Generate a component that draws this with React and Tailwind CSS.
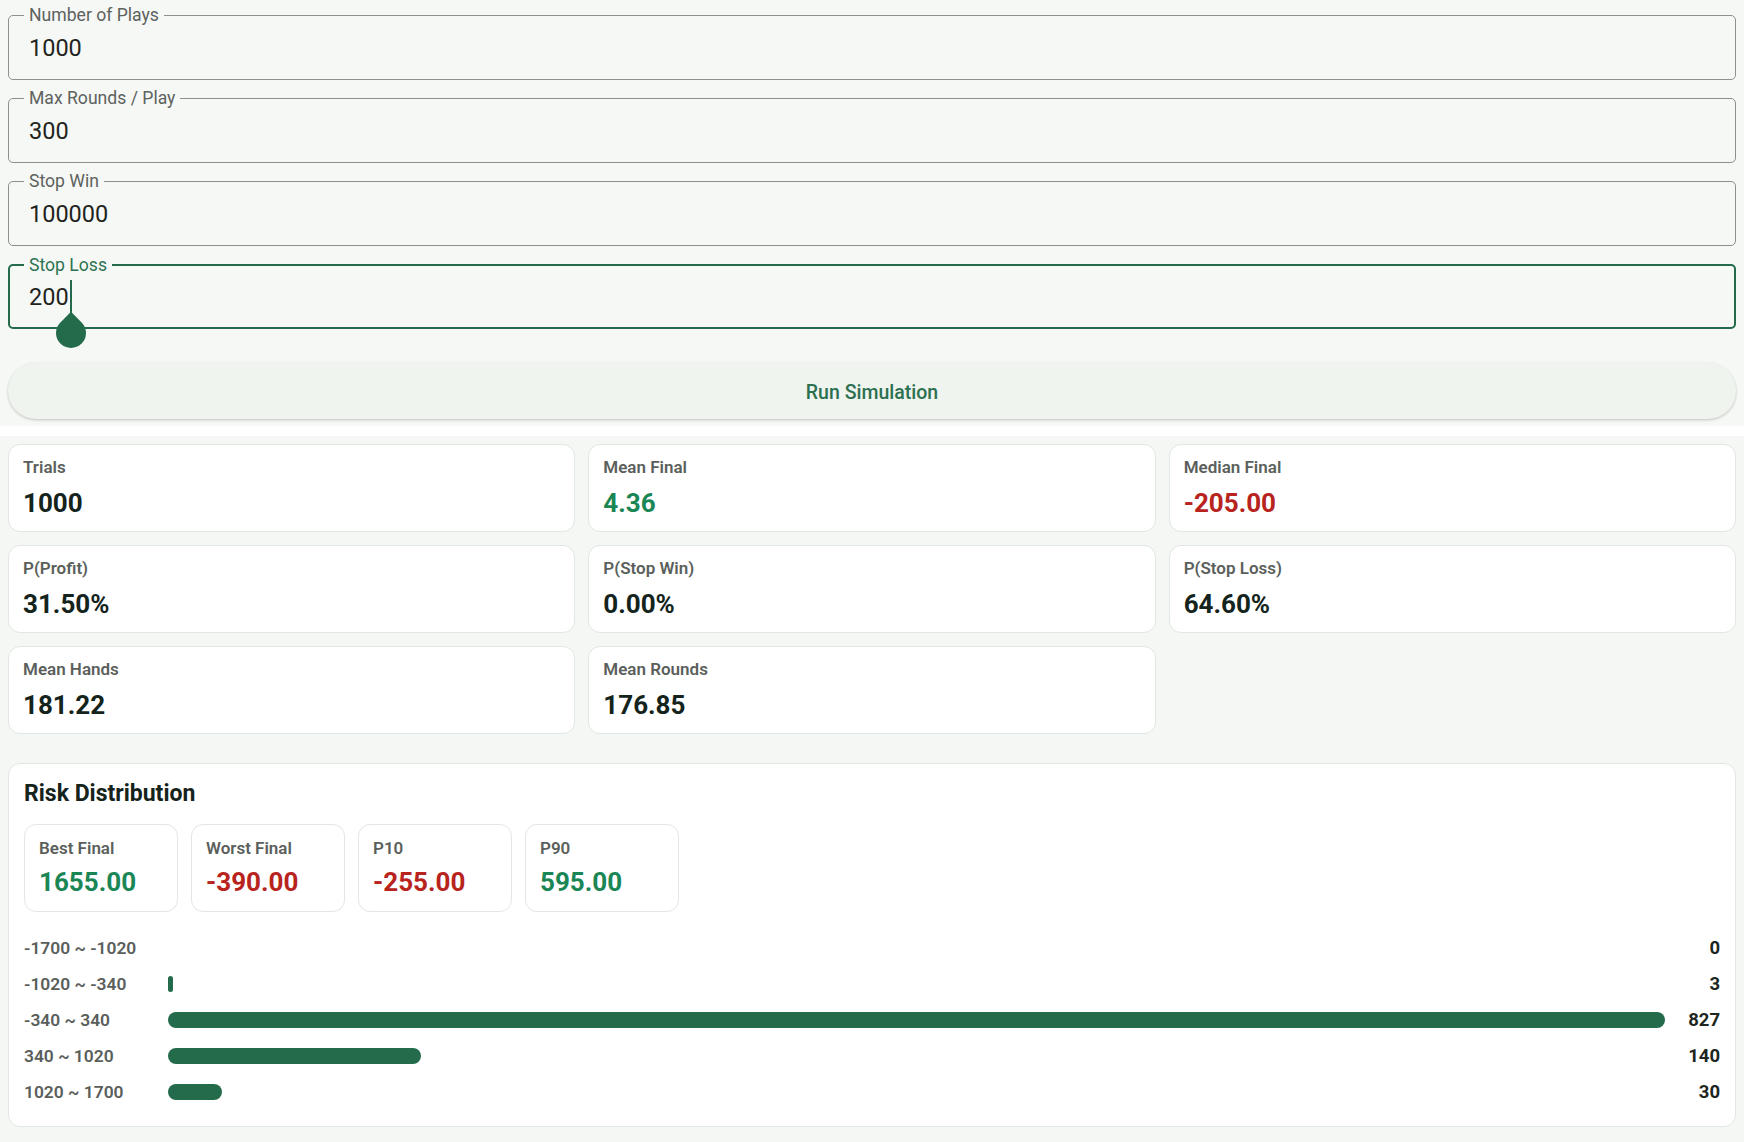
import clsx from 'clsx'

const fields = [
  { label: 'Number of Plays', value: '1000' },
  { label: 'Max Rounds / Play', value: '300' },
  { label: 'Stop Win', value: '100000' },
  { label: 'Stop Loss', value: '200', focused: true },
]

const stats = [
  { label: 'Trials', value: '1000' },
  { label: 'Mean Final', value: '4.36', tone: 'up' },
  { label: 'Median Final', value: '-205.00', tone: 'down' },
  { label: 'P(Profit)', value: '31.50%' },
  { label: 'P(Stop Win)', value: '0.00%' },
  { label: 'P(Stop Loss)', value: '64.60%' },
  { label: 'Mean Hands', value: '181.22' },
  { label: 'Mean Rounds', value: '176.85' },
]

const risk = [
  { label: 'Best Final', value: '1655.00', tone: 'up' },
  { label: 'Worst Final', value: '-390.00', tone: 'down' },
  { label: 'P10', value: '-255.00', tone: 'down' },
  { label: 'P90', value: '595.00', tone: 'up' },
]

const buckets = [
  { range: '-1700 ~ -1020', count: 0 },
  { range: '-1020 ~ -340', count: 3 },
  { range: '-340 ~ 340', count: 827 },
  { range: '340 ~ 1020', count: 140 },
  { range: '1020 ~ 1700', count: 30 },
]

const toneClass = (tone) =>
  tone === 'up' ? 'text-[#1b8655]' : tone === 'down' ? 'text-[#b8241d]' : 'text-[#14231b]'

function Field({ label, value, focused }) {
  return (
    <div
      className={clsx(
        'relative flex h-[65px] items-center rounded-[5px]',
        focused ? 'border-2 border-[#236b4b] pl-[19px]' : 'border border-[#8c918d] pl-[20px]'
      )}
    >
      <span
        className={clsx(
          'absolute -top-[11px] bg-[#f6f8f5] px-[5px] text-[17.6px] leading-[20px]',
          focused ? 'left-[14px] text-[#2d7352]' : 'left-[15px] text-[#5d625e]'
        )}
      >
        {label}
      </span>
      <span className="text-[23.5px] leading-[28px] text-[#1f2420]">{value}</span>
      {focused && (
        <span className="relative ml-[1px] inline-block h-[34px] w-[2px] bg-[#236b4b]">
          <span className="absolute left-[-14px] top-[38px] size-[30px] rotate-45 rounded-full rounded-tl-none bg-[#236b4b]" />
        </span>
      )}
    </div>
  )
}

function StatCard({ label, value, tone, className, compact }) {
  return (
    <div
      className={clsx(
        'h-[88px] rounded-xl border border-[#e1e7e1] bg-white px-[14px]',
        compact ? 'pt-[13px]' : 'pt-[12px]',
        className
      )}
    >
      <div className="text-[17px] font-semibold leading-[20px] text-[#5b5f5c]">{label}</div>
      <div
        className={clsx(
          'text-[26px] font-bold leading-[30px]',
          compact ? 'mt-[9px]' : 'mt-[11px]',
          toneClass(tone)
        )}
      >
        {value}
      </div>
    </div>
  )
}

export default function App() {
  const max = Math.max(...buckets.map((b) => b.count))

  return (
    <div className="flex min-h-screen flex-col bg-white font-['Roboto','Liberation_Sans',sans-serif]">
      <section className="bg-[#f6f8f5] px-2 pb-[7px] pt-[15px]">
        <div className="flex flex-col gap-[18px]">
          {fields.map((f) => (
            <Field key={f.label} {...f} />
          ))}
        </div>
        <button className="mt-[34px] flex h-[56px] w-full items-center justify-center rounded-full bg-[#eff4ef] pt-[4px] text-[19.5px] font-medium text-[#2c7050] shadow-[0_1px_3px_rgba(0,0,0,0.22)]">
          Run Simulation
        </button>
      </section>

      <div className="h-[10px] bg-white" />

      <section className="flex-1 bg-[#f5f7f4] px-2 pb-4 pt-2">
        <div className="grid grid-cols-3 gap-[13px]">
          {stats.map((s) => (
            <StatCard key={s.label} {...s} />
          ))}
        </div>

        <div className="mt-[29px] rounded-xl border border-[#e1e7e1] bg-white px-[15px] pb-[24px] pt-[16px]">
          <h2 className="text-[23px] font-bold leading-[28px] text-[#15231b]">Risk Distribution</h2>
          <div className="mt-4 flex gap-[13px]">
            {risk.map((r) => (
              <StatCard key={r.label} {...r} compact className="w-[154px] border-[#dde6dd]" />
            ))}
          </div>

          <div className="mt-[26px] flex flex-col gap-[16px]">
            {buckets.map((b) => (
              <div key={b.range} className="flex h-[20px] items-center">
                <div className="w-[144px] shrink-0 text-[17.4px] font-semibold leading-[20px] text-[#5a5e5b]">
                  {b.range}
                </div>
                <div className="flex-1">
                  {b.count > 0 && (
                    <div
                      className="h-[16px] rounded-full bg-[#236b4b]"
                      style={{ width: `${(b.count / max) * 100}%` }}
                    />
                  )}
                </div>
                <div className="ml-[15px] w-[40px] shrink-0 text-right text-[18.5px] font-bold leading-[20px] text-[#1d2620]">
                  {b.count}
                </div>
              </div>
            ))}
          </div>
        </div>
      </section>
    </div>
  )
}
